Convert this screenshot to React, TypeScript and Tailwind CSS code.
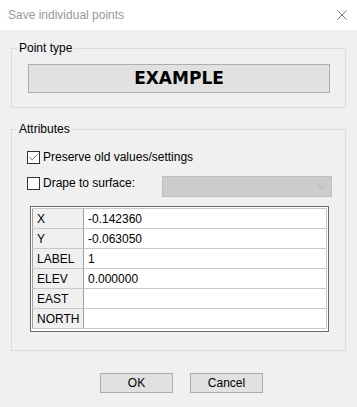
import { Check, ChevronDown } from "lucide-react";

const rows = [
  { name: "X", value: "-0.142360" },
  { name: "Y", value: "-0.063050" },
  { name: "LABEL", value: "1" },
  { name: "ELEV", value: "0.000000" },
  { name: "EAST", value: "" },
  { name: "NORTH", value: "" },
];

function CheckBox({ checked }: { checked?: boolean }) {
  return (
    <span className="flex h-[13px] w-[13px] shrink-0 items-center justify-center border border-[#333333] bg-white">
      {checked && <Check size={11} strokeWidth={1.6} className="text-[#333333]" />}
    </span>
  );
}

function GroupBox({ title, className, children }: { title: string; className?: string; children: React.ReactNode }) {
  return (
    <fieldset className="border border-[#dcdcdc] p-0">
      <legend className="ml-[5px] px-[2px] text-[12px] leading-[16px] text-black">{title}</legend>
      <div className={className}>{children}</div>
    </fieldset>
  );
}

export default function App() {
  return (
    <div
      className="flex h-[407px] w-[357px] flex-col overflow-hidden bg-[#f0f0f0] text-[12px] text-black"
      style={{ fontFamily: '"Liberation Sans", Arial, sans-serif' }}
    >
      <div className="flex h-[30px] shrink-0 items-center justify-between bg-white pl-[8px] pr-[10px]">
        <span className="text-[12px] text-[#999999]">Save individual points</span>
        <svg width="10" height="10" viewBox="0 0 10 10" className="text-[#777777]">
          <path d="M0.5 0.5 L9.5 9.5 M9.5 0.5 L0.5 9.5" stroke="currentColor" strokeWidth="1" fill="none" />
        </svg>
      </div>

      <div className="px-[11px] pt-[10px]">
        <GroupBox title="Point type" className="pl-[16px] pr-[15px] pb-[14px]">
          <div
            className="mt-[8px] flex h-[29px] items-center justify-center border border-[#adadad] bg-[#e1e1e1] text-[17px] font-bold"
            style={{ fontFamily: '"DejaVu Sans", Verdana, sans-serif' }}
          >
            EXAMPLE
          </div>
        </GroupBox>

        <div className="mt-[13px]">
          <GroupBox title="Attributes" className="h-[213px] pl-[15px]">
            <div className="pt-[14px] flex h-[27px] items-end gap-[3px]">
              <CheckBox checked />
              <span className="leading-[13px]">Preserve old values/settings</span>
            </div>

            <div className="mt-[12px] flex items-start">
              <div className="mt-[1px] flex h-[13px] w-[135px] items-center gap-[3px]">
                <CheckBox />
                <span className="leading-[13px]">Drape to surface:</span>
              </div>
              <div className="flex h-[21px] w-[170px] items-center justify-end border border-[#bfbfbf] bg-[#cccccc] pr-[4px]">
                <ChevronDown size={12} strokeWidth={1.2} className="text-[#9a9a9a]" />
              </div>
            </div>

            <div className="ml-[3px] mt-[9px] w-[299px] border border-[#696969] bg-white p-[1px] pb-[2px]">
              <div className="border-t border-[#c8c8c8]">
                {rows.map((r) => (
                  <div key={r.name} className="flex h-[20px] border-b border-[#c8c8c8]">
                    <div className="flex w-[52px] items-center border-x border-[#a0a0a0] bg-[#f0f0f0] pl-[4px]">
                      {r.name}
                    </div>
                    <div className="flex flex-1 items-center border-r border-[#c8c8c8] pl-[4px]">{r.value}</div>
                  </div>
                ))}
              </div>
            </div>
          </GroupBox>
        </div>
      </div>

      <div className="mt-[22px] flex gap-[17px] pl-[100px]">
        <button className="flex h-[20px] w-[73px] items-center justify-center border border-[#adadad] bg-[#e1e1e1]">
          OK
        </button>
        <button className="flex h-[20px] w-[73px] items-center justify-center border border-[#adadad] bg-[#e1e1e1]">
          Cancel
        </button>
      </div>
    </div>
  );
}
